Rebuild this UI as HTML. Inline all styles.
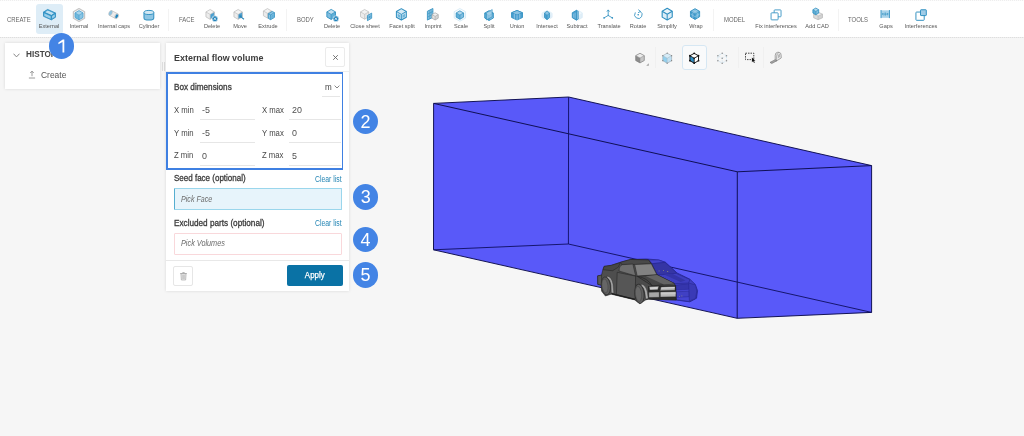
<!DOCTYPE html>
<html>
<head>
<meta charset="utf-8">
<title>External flow volume</title>
<style>
*{box-sizing:border-box;margin:0;padding:0}
html,body{width:1024px;height:436px;overflow:hidden;background:#f6f6f6;font-family:"Liberation Sans",sans-serif;color:#333}
.abs{position:absolute}
#toolbar{position:absolute;left:0;top:0;width:1024px;height:37.5px;background:#fff;border-bottom:1px solid #e6e6e6;border-top:1px solid #f0f0f0}
#toolbar:before{content:"";position:absolute;left:0;top:-1px;width:1024px;height:1.4px;background:repeating-linear-gradient(90deg,#eeeeee 0 1px,#fcfcfc 1px 2px)}
#toolbar:after{content:"";position:absolute;left:0;bottom:-1px;width:1024px;height:1px;background:repeating-linear-gradient(90deg,#dedede 0 1px,#ededed 1px 2px)}
.tl{position:absolute;top:21.3px;font-size:6.1px;line-height:8px;color:#555;white-space:nowrap;transform:translateX(-50%) scaleX(0.92);text-align:center}
.grp{position:absolute;top:13.9px;font-size:6.6px;line-height:9px;color:#666;white-space:nowrap;transform-origin:0 50%;transform:scaleX(0.9)}
.sep{position:absolute;top:8px;width:1px;height:22px;background:#f3f3f3}
.ico{position:absolute;top:6.5px;width:16px;height:16px;overflow:visible}
.panel{position:absolute;background:#fff;box-shadow:0 0 3px rgba(0,0,0,.13)}
.lbl{position:absolute;font-size:9.4px;line-height:10px;color:#484848;white-space:nowrap;transform-origin:0 50%;transform:scaleX(0.825)}
.val{position:absolute;font-size:9.4px;line-height:10px;color:#505050;white-space:nowrap;transform-origin:0 50%;transform:scaleX(0.95)}
.ul{position:absolute;height:1px;background:#e6e6e6}
.b{font-weight:bold}
.num{position:absolute;width:25.4px;height:25.4px;border-radius:50%;background:#4384e5;color:#fff;font-size:18px;line-height:26.6px;text-align:center;margin-top:-0.3px;margin-left:-0.2px}
</style>
</head>
<body>
<div id="root" style="position:absolute;left:0;top:0;width:1024px;height:436px;will-change:transform">
<!-- 3D scene -->
<svg class="abs" style="left:0;top:0" width="1024" height="436" viewBox="0 0 1024 436">
 <g id="box">
  <polygon points="433.6,103.4 568.6,97 871.6,165.6 871.6,312.4 737.2,318.3 433.5,249.8" fill="#5959f9"/>
  <g stroke="#0c0c4c" stroke-width="0.95" fill="none" stroke-linejoin="round">
   <polygon points="433.6,103.4 568.6,97 871.6,165.6 871.6,312.4 737.2,318.3 433.5,249.8"/>
   <path d="M433.6,103.4 L737.3,171.8 L871.6,165.6 M737.3,171.8 L737.2,318.3"/><path d="M568.6,97 L568.4,244 L433.5,249.8 M568.4,244 L871.6,312.4" stroke="#121266" stroke-width="0.95"/>
  </g>
 </g>
 <g id="car" transform="translate(592,252) scale(0.128440)" stroke-linejoin="round">
  <!-- blue (inside box) half -->
  <g stroke="#262690" stroke-width="6">
   <polygon points="300,58 420,54 520,62 572,80 662,163 762,212 802,250 822,300 814,360 762,388 655,374 650,262 640,245 505,177 462,92 440,62" fill="#3f3fc2"/>
   <polygon points="440,62 520,63 570,81 470,90" fill="#4545cc" stroke-width="4"/>
   <polygon points="466,92 570,81 658,162 640,172 508,177" fill="#3535a4" stroke-width="5"/>
   <polygon points="508,180 655,166 762,214 752,242 642,246" fill="#3e3ec0" stroke-width="5"/>
   <polygon points="560,176 625,170 728,222 690,234" fill="#3434a8" stroke="none"/>
   <polygon points="650,262 775,252 812,300 810,358 762,386 656,372" fill="#4545d2" stroke-width="5"/>
   <polygon points="656,258 753,248 753,290 656,296" fill="#3535ac" stroke="#2a2a98" stroke-width="4"/>
   <polygon points="656,310 757,305 757,348 656,353" fill="#4040c4" stroke="#2a2a98" stroke-width="4"/>
   <polygon points="753,242 806,256 816,304 806,362 758,382" fill="#3a3ab6" stroke="#2a2a98" stroke-width="5"/>
  </g>
  <g fill="#d8d060" stroke="none"><circle cx="522" cy="147" r="3.5"/><circle cx="556" cy="143" r="3.5"/><circle cx="590" cy="152" r="3.5"/><circle cx="683" cy="345" r="3"/><circle cx="700" cy="342" r="3"/></g>
  <!-- gray (outside box) half -->
  <g stroke="#222" stroke-width="4.5">
   <!-- body side silhouette -->
   <polygon points="44,186 74,180 84,140 94,112 150,104 220,80 300,58 440,62 462,92 505,177 640,245 650,262 655,374 440,368 420,372 372,402 330,372 150,328 104,342 74,304 72,258 44,252" fill="#4e4e4e"/>
   <!-- trunk / rear deck -->
   <polygon points="94,112 150,104 222,82 205,118 160,146 86,138" fill="#464646" stroke-width="4"/>
   <!-- roof -->
   <polygon points="222,80 300,58 440,62 462,92 330,97 232,97" fill="#494949" stroke-width="4"/>
   <!-- side window -->
   <path d="M210,148 Q212,106 236,99 L318,94 L340,186 Z" fill="#6e6e6e" stroke-width="4"/>
   <!-- windshield -->
   <polygon points="332,98 462,92 505,177 352,187" fill="#828282" stroke-width="4"/>
   <!-- hood -->
   <polygon points="352,190 505,178 640,245 470,264" fill="#464646" stroke-width="4"/>
   <polygon points="420,188 505,180 640,245 560,254" fill="#646464" stroke="none"/><path d="M352,190 Q430,200 470,264" fill="none" stroke="#222" stroke-width="5"/>
   <!-- door / side panel -->
   <polygon points="196,158 340,188 336,368 190,332" fill="#565656" stroke-width="4"/>
   <!-- front fender -->
   <polygon points="340,190 352,190 470,266 440,270 440,366 420,370 405,290 372,250 338,258" fill="#4b4b4b" stroke-width="3"/>
   <!-- rear bumper -->
   <polygon points="44,186 74,180 76,258 46,252" fill="#585858" stroke-width="4"/>
   <!-- front fascia -->
   <polygon points="440,270 470,264 650,262 655,374 440,366" fill="#2c2c2c" stroke-width="4"/>
   <polygon points="445,271 520,267 512,293 450,296" fill="#d0d0d0" stroke-width="3"/>
   <polygon points="536,273 646,269 646,298 531,301" fill="#aeaeae" stroke-width="3"/>
   <polygon points="541,276 644,272 644,282 539,286" fill="#d2d2d2" stroke="none"/>
   <polygon points="442,313 524,311 524,353 442,354" fill="#a6a6a6" stroke-width="3"/>
   <polygon points="532,312 653,310 653,349 532,351" fill="#b6b6b6" stroke-width="3"/>
   <polygon points="536,316 650,314 650,328 536,330" fill="#c8c8c8" stroke="none"/>
   <!-- wheel arches (light crescents) -->
   <path d="M118,186 Q156,196 164,252 L170,322 L150,318 L148,258 Q142,214 118,200 Z" fill="#a4a4a4" stroke="#2a2a2a" stroke-width="3"/>
   <path d="M384,250 Q420,260 430,310 L438,362 L418,366 L412,316 Q404,274 384,264 Z" fill="#acacac" stroke="#2a2a2a" stroke-width="3"/>
   <!-- rear wheel -->
   <ellipse cx="108" cy="264" rx="35" ry="70" fill="#5c5c5c" transform="rotate(-7 108 264)"/>
   <ellipse cx="101" cy="264" rx="23" ry="54" fill="#666" stroke="#3a3a3a" stroke-width="3" transform="rotate(-7 101 264)"/>
   <!-- front wheel -->
   <ellipse cx="369" cy="326" rx="36" ry="75" fill="#5e5e5e" transform="rotate(-6 369 326)"/>
   <ellipse cx="362" cy="326" rx="24" ry="58" fill="#686868" stroke="#3a3a3a" stroke-width="3" transform="rotate(-6 362 326)"/>
   <!-- sill -->
   <path d="M152,324 L334,368" fill="none" stroke="#1e1e1e" stroke-width="10"/>
  </g>
 </g>
</svg>


<!-- view toolbar -->
<div id="viewbar">
 <div class="abs" style="left:682.2px;top:45px;width:25.3px;height:24.5px;background:#f9fafb;border:1px solid #d6e7f3;border-radius:3px"></div>
 <div class="abs" style="left:655px;top:47px;width:1px;height:21px;background:#f0f0f0"></div>
 <div class="abs" style="left:737.5px;top:47px;width:1px;height:21px;background:#f0f0f0"></div>
 <div class="abs" style="left:763px;top:47px;width:1px;height:21px;background:#f0f0f0"></div>
 <!-- gray cube : center (639.75,57.85) -->
 <svg class="abs" style="left:632.75px;top:50.85px" width="14" height="14" viewBox="0 0 16 16">
  <polygon points="8,2.6 12.9,5.3 8,8 3.1,5.3" fill="#ececec"/><polygon points="3.1,5.3 8,8 8,13.6 3.1,10.9" fill="#8c8c8c"/><polygon points="8,8 12.9,5.3 12.9,10.9 8,13.6" fill="#c6c6c6"/>
  <polygon points="8,2.6 12.9,5.3 12.9,10.9 8,13.6 3.1,10.9 3.1,5.3" fill="none" stroke="#7a7a7a" stroke-width="0.8" stroke-linejoin="round"/>
  <path d="M3.1,5.3 L8,8 L12.9,5.3 M8,8 V13.6" stroke="#8a8a8a" stroke-width="0.6" fill="none"/>
 </svg>
 <svg class="abs" style="left:645.8px;top:63.4px" width="3" height="3" viewBox="0 0 3 3"><polygon points="2.8,0.2 2.8,2.8 0.2,2.8" fill="#a0a0a0"/></svg>
 <!-- light blue cube : center (667.4,57.9) -->
 <svg class="abs" style="left:660.2px;top:50.7px" width="14.4" height="14.4" viewBox="0 0 16 16">
  <polygon points="8,2.4 12.9,5.2 8,8 3.1,5.2" fill="#d6ecf8"/><polygon points="3.1,5.2 8,8 8,13.6 3.1,10.8" fill="#92d0ef"/><polygon points="8,8 12.9,5.2 12.9,10.8 8,13.6" fill="#bfe0f3"/>
  <polygon points="8,2.4 12.9,5.2 12.9,10.8 8,13.6 3.1,10.8 3.1,5.2" fill="none" stroke="#9aa9b3" stroke-width="0.7" stroke-linejoin="round"/>
  <path d="M3.1,5.2 L8,8 L12.9,5.2 M8,8 V13.6" stroke="#9fb4c0" stroke-width="0.6" fill="none"/>
  <g fill="#808080"><circle cx="8" cy="2.4" r="0.7"/><circle cx="12.9" cy="5.2" r="0.7"/><circle cx="12.9" cy="10.8" r="0.7"/><circle cx="8" cy="13.6" r="0.7"/><circle cx="3.1" cy="10.8" r="0.7"/><circle cx="3.1" cy="5.2" r="0.7"/></g>
 </svg>
 <!-- black/blue cube (selected) : center (694.65,58) -->
 <svg class="abs" style="left:687.45px;top:50.8px" width="14.4" height="14.4" viewBox="0 0 16 16">
  <polygon points="8,2.6 12.8,5.3 8,8 3.2,5.3" fill="#fff"/><polygon points="3.2,5.3 8,8 8,13.5 3.2,10.8" fill="#2e8fc6"/><polygon points="8,8 12.8,5.3 12.8,10.8 8,13.5" fill="#fff"/>
  <polygon points="8,2.6 12.8,5.3 12.8,10.8 8,13.5 3.2,10.8 3.2,5.3" fill="none" stroke="#1a1a1a" stroke-width="1.1" stroke-linejoin="round"/>
  <path d="M3.2,5.3 L8,8 L12.8,5.3 M8,8 V13.5" stroke="#1a1a1a" stroke-width="1.0" fill="none"/>
  <g fill="#111"><circle cx="8" cy="2.6" r="1.0"/><circle cx="12.8" cy="5.3" r="1.0"/><circle cx="12.8" cy="10.8" r="1.0"/><circle cx="8" cy="13.5" r="1.0"/><circle cx="3.2" cy="10.8" r="1.0"/><circle cx="3.2" cy="5.3" r="1.0"/><circle cx="8" cy="8" r="0.9"/></g>
 </svg>
 <!-- dotted cube : center (722,58) -->
 <svg class="abs" style="left:714.8px;top:50.8px" width="14.4" height="14.4" viewBox="0 0 16 16">
  <polygon points="8,2.6 12.8,5.3 12.8,10.8 8,13.5 3.2,10.8 3.2,5.3" fill="none" stroke="#b4d8ee" stroke-width="0.8" stroke-dasharray="0.9 0.9"/>
  <path d="M3.2,5.3 L8,8 L12.8,5.3 M8,8 V13.5" stroke="#bcdcf0" stroke-width="0.7" fill="none" stroke-dasharray="0.9 0.9"/>
  <g fill="#8e8e8e"><circle cx="8" cy="2.6" r="0.85"/><circle cx="12.8" cy="5.3" r="0.85"/><circle cx="12.8" cy="10.8" r="0.85"/><circle cx="8" cy="13.5" r="0.85"/><circle cx="3.2" cy="10.8" r="0.85"/><circle cx="3.2" cy="5.3" r="0.85"/><circle cx="8" cy="8" r="0.8"/></g>
 </svg>
 <!-- box select -->
 <svg class="abs" style="left:742px;top:49.2px" width="16" height="16" viewBox="0 0 16 16">
  <rect x="3.5" y="4.2" width="8.3" height="6.4" fill="none" stroke="#333" stroke-width="0.9" stroke-dasharray="1.5 1"/>
  <path d="M9.9,8.4 L9.9,13.3 L11.1,12.1 L12.0,13.9 L12.8,13.5 L11.9,11.8 L13.4,11.7 Z" fill="#111"/>
 </svg>
 <!-- tape measure (page coords) -->
 <svg class="abs" style="left:766px;top:48px" width="20" height="20" viewBox="766 48 20 20">
  <path d="M775.2,60.6 L775.2,55.6 Q775.2,52.4 777.6,52.3 L778.9,52.3 Q781.2,52.5 781.2,55.4 L781.2,58.0 L776.6,60.9 Z" fill="#ebebeb" stroke="#7c7c7c" stroke-width="0.65" stroke-linejoin="round"/>
  <path d="M776.6,60.9 L776.6,56.3 Q776.7,53.6 778.9,52.4" fill="none" stroke="#7c7c7c" stroke-width="0.55"/>
  <path d="M778.4,57.6 L778.4,55.6 Q778.5,54.5 779.6,54.4 L779.8,56.6 Z" fill="#cfcfcf" stroke="#777" stroke-width="0.4"/>
  <polygon points="770.0,62.4 775.2,59.7 776.8,60.8 771.8,63.5" fill="#a4a4a4" stroke="#6c6c6c" stroke-width="0.6" stroke-linejoin="round"/>
 </svg>
</div>

<!-- top toolbar -->
<div id="toolbar">
<div class="abs" style="left:35.7px;top:2.8px;width:27.3px;height:30px;background:#deedf7;border-radius:3px"></div>
<div class="grp" style="left:7.00px">CREATE</div>
<div class="grp" style="left:178.75px">FACE</div>
<div class="grp" style="left:297.00px">BODY</div>
<div class="grp" style="left:723.75px">MODEL</div>
<div class="grp" style="left:848.00px">TOOLS</div>
<div class="sep" style="left:168.00px"></div>
<div class="sep" style="left:286.20px"></div>
<div class="sep" style="left:713.00px"></div>
<div class="sep" style="left:838.20px"></div>
<svg class="ico" style="left:41.98px;top:6.08px;width:15.04px;height:15.04px" width="15.04" height="15.04" viewBox="0 0 16 16"><polygon points="1.6,5.4 6.0,2.6 14.4,6.4 14.4,10.9 10.0,13.7 1.6,9.9" fill="#48a3d2"/><polygon points="3.3,5.5 6.1,3.7 12.7,6.7 9.9,8.5" fill="#c0e0f1"/><polygon points="2.5,6.8 9.2,9.8 9.2,12.5 2.5,9.5" fill="#9dcfe9"/><polygon points="10.8,9.7 13.6,7.9 13.6,10.5 10.8,12.3" fill="#9dcfe9"/><path d="M1.6,5.4 L6.0,2.6 L14.4,6.4 L14.4,10.9 L10.0,13.7 L1.6,9.9 Z M1.6,5.4 L10.0,9.2 L14.4,6.4 M10.0,9.2 L10.0,13.7" fill="none" stroke="#2d8dc0" stroke-width="0.9" stroke-linejoin="round"/></svg>
<div class="tl" style="left:49.38px">External</div>
<svg class="ico" style="left:70.90px;top:5.50px;width:16.00px;height:16.00px" width="16.00" height="16.00" viewBox="0 0 16 16"><g><polygon points="8.00,1.60 13.60,4.80 8.00,8.00 2.40,4.80" fill="#f4f4f4"/><polygon points="2.40,4.80 8.00,8.00 8.00,14.40 2.40,11.20" fill="#f0f0f0"/><polygon points="8.00,8.00 13.60,4.80 13.60,11.20 8.00,14.40" fill="#ececec"/><polygon points="8.00,1.60 13.60,4.80 13.60,11.20 8.00,14.40 2.40,11.20 2.40,4.80" fill="none" stroke="#c6c6c6" stroke-width="1.2" stroke-linejoin="round"/></g><g><polygon points="8.00,3.60 12.00,5.90 8.00,8.20 4.00,5.90" fill="#a9d5ec"/><polygon points="4.00,5.90 8.00,8.20 8.00,12.80 4.00,10.50" fill="#6fb9de"/><polygon points="8.00,8.20 12.00,5.90 12.00,10.50 8.00,12.80" fill="#8cc6e5"/><polygon points="8.00,3.60 12.00,5.90 12.00,10.50 8.00,12.80 4.00,10.50 4.00,5.90" fill="none" stroke="#4fa3d0" stroke-width="0.85" stroke-linejoin="round"/><path d="M4.00,5.90 L8.00,8.20 L12.00,5.90 M8.00,8.20 L8.00,12.80" fill="none" stroke="#4fa3d0" stroke-width="0.765" stroke-linejoin="round"/></g></svg>
<div class="tl" style="left:78.75px">Internal</div>
<svg class="ico" style="left:107.34px;top:7.04px;width:13.12px;height:13.12px" width="13.12" height="13.12" viewBox="0 0 16 16"><g transform="rotate(28 8 8)"><rect x="3.6" y="4.8" width="8.6" height="6.4" fill="#ececec" stroke="#bdbdbd" stroke-width="0.8"/><ellipse cx="3.8" cy="8" rx="1.9" ry="3.2" fill="#8cc3e2" stroke="#bdbdbd" stroke-width="0.6"/><ellipse cx="12.3" cy="8" rx="2.1" ry="3.3" fill="#ececec" stroke="#bdbdbd" stroke-width="0.8"/><ellipse cx="12.3" cy="8" rx="1.5" ry="2.5" fill="#1f82bb"/></g></svg>
<div class="tl" style="left:114.00px">Internal caps</div>
<svg class="ico" style="left:142.32px;top:7.12px;width:13.76px;height:13.76px" width="13.76" height="13.76" viewBox="0 0 16 16"><path d="M2.3,5.2 V11.6 A5.7,2.4 0 0 0 13.7,11.6 V5.2" fill="#8fc6e4" stroke="#2f8fc0" stroke-width="1.2"/><ellipse cx="8" cy="5.2" rx="5.7" ry="2.4" fill="#d2e8f4" stroke="#2f8fc0" stroke-width="1.1"/></svg>
<div class="tl" style="left:149.38px">Cylinder</div>
<svg class="ico" style="left:204.46px;top:6.76px;width:14.08px;height:14.08px" width="14.08" height="14.08" viewBox="0 0 16 16"><g><polygon points="7.00,1.70 11.80,4.50 7.00,7.30 2.20,4.50" fill="#f3f3f3"/><polygon points="2.20,4.50 7.00,7.30 7.00,12.90 2.20,10.10" fill="#ececec"/><polygon points="7.00,7.30 11.80,4.50 11.80,10.10 7.00,12.90" fill="#4a9fd0"/><polygon points="7.00,1.70 11.80,4.50 11.80,10.10 7.00,12.90 2.20,10.10 2.20,4.50" fill="none" stroke="#b9b9b9" stroke-width="0.8" stroke-linejoin="round"/><path d="M2.20,4.50 L7.00,7.30 L11.80,4.50 M7.00,7.30 L7.00,12.90" fill="none" stroke="#b9b9b9" stroke-width="0.7200000000000001" stroke-linejoin="round"/></g><circle cx="12.4" cy="12.2" r="3.3" fill="#1f82bb" stroke="#fff" stroke-width="0.7"/><path d="M11.1,10.899999999999999 l2.6,2.6 m0,-2.6 l-2.6,2.6" stroke="#fff" stroke-width="0.9" fill="none"/></svg>
<div class="tl" style="left:211.88px">Delete</div>
<svg class="ico" style="left:232.46px;top:6.76px;width:14.08px;height:14.08px" width="14.08" height="14.08" viewBox="0 0 16 16"><g><polygon points="7.00,1.70 11.80,4.50 7.00,7.30 2.20,4.50" fill="#f3f3f3"/><polygon points="2.20,4.50 7.00,7.30 7.00,12.90 2.20,10.10" fill="#ececec"/><polygon points="7.00,7.30 11.80,4.50 11.80,10.10 7.00,12.90" fill="#4a9fd0"/><polygon points="7.00,1.70 11.80,4.50 11.80,10.10 7.00,12.90 2.20,10.10 2.20,4.50" fill="none" stroke="#b9b9b9" stroke-width="0.8" stroke-linejoin="round"/><path d="M2.20,4.50 L7.00,7.30 L11.80,4.50 M7.00,7.30 L7.00,12.90" fill="none" stroke="#b9b9b9" stroke-width="0.7200000000000001" stroke-linejoin="round"/></g><path d="M9,9.2 L13.6,12.8" stroke="#2a86b8" stroke-width="1.2"/><path d="M8.2,8.2 L11.6,8.8 L9.2,11.4 Z" fill="#2a86b8"/></svg>
<div class="tl" style="left:240.00px">Move</div>
<svg class="ico" style="left:261.56px;top:6.46px;width:14.08px;height:14.08px" width="14.08" height="14.08" viewBox="0 0 16 16"><g><polygon points="6.20,1.80 10.80,4.50 6.20,7.20 1.60,4.50" fill="#f3f3f3"/><polygon points="1.60,4.50 6.20,7.20 6.20,12.60 1.60,9.90" fill="#ececec"/><polygon points="6.20,7.20 10.80,4.50 10.80,9.90 6.20,12.60" fill="#e6e6e6"/><polygon points="6.20,1.80 10.80,4.50 10.80,9.90 6.20,12.60 1.60,9.90 1.60,4.50" fill="none" stroke="#b9b9b9" stroke-width="0.8" stroke-linejoin="round"/><path d="M1.60,4.50 L6.20,7.20 L10.80,4.50 M6.20,7.20 L6.20,12.60" fill="none" stroke="#b9b9b9" stroke-width="0.7200000000000001" stroke-linejoin="round"/></g><polygon points="7.2,7.6 11.6,5.0 14.2,6.4 14.2,11.8 9.8,14.4 7.2,13.0" fill="#8cc3e2" stroke="#2f8fc0" stroke-width="0.9" stroke-linejoin="round"/><path d="M7.2,7.6 L9.8,9.0 L14.2,6.4 M9.8,9.0 V14.4" stroke="#2f8fc0" stroke-width="0.8" fill="none"/><polygon points="10.6,9.6 13.4,8.0 13.4,11.4 10.6,13.0" fill="#5fafd8"/></svg>
<div class="tl" style="left:268.38px">Extrude</div>
<svg class="ico" style="left:325.46px;top:6.76px;width:14.08px;height:14.08px" width="14.08" height="14.08" viewBox="0 0 16 16"><g><polygon points="7.00,1.60 11.90,4.45 7.00,7.30 2.10,4.45" fill="#c4e0f0"/><polygon points="2.10,4.45 7.00,7.30 7.00,13.00 2.10,10.15" fill="#7fbde0"/><polygon points="7.00,7.30 11.90,4.45 11.90,10.15 7.00,13.00" fill="#5fafd8"/><polygon points="7.00,1.60 11.90,4.45 11.90,10.15 7.00,13.00 2.10,10.15 2.10,4.45" fill="none" stroke="#2f8fc0" stroke-width="1.0" stroke-linejoin="round"/><path d="M2.10,4.45 L7.00,7.30 L11.90,4.45 M7.00,7.30 L7.00,13.00" fill="none" stroke="#2f8fc0" stroke-width="0.9" stroke-linejoin="round"/></g><circle cx="12.4" cy="12.2" r="3.3" fill="#1f82bb" stroke="#fff" stroke-width="0.7"/><path d="M11.1,10.899999999999999 l2.6,2.6 m0,-2.6 l-2.6,2.6" stroke="#fff" stroke-width="0.9" fill="none"/></svg>
<div class="tl" style="left:332.38px">Delete</div>
<svg class="ico" style="left:358.76px;top:6.76px;width:14.08px;height:14.08px" width="14.08" height="14.08" viewBox="0 0 16 16"><g><polygon points="6.40,1.70 11.10,4.45 6.40,7.20 1.70,4.45" fill="#f3f3f3"/><polygon points="1.70,4.45 6.40,7.20 6.40,12.70 1.70,9.95" fill="#ececec"/><polygon points="6.40,7.20 11.10,4.45 11.10,9.95 6.40,12.70" fill="#e6e6e6"/><polygon points="6.40,1.70 11.10,4.45 11.10,9.95 6.40,12.70 1.70,9.95 1.70,4.45" fill="none" stroke="#b9b9b9" stroke-width="0.8" stroke-linejoin="round"/><path d="M1.70,4.45 L6.40,7.20 L11.10,4.45 M6.40,7.20 L6.40,12.70" fill="none" stroke="#b9b9b9" stroke-width="0.7200000000000001" stroke-linejoin="round"/></g><polygon points="9.6,8.6 14.4,5.8 14.4,11.6 9.6,14.4" fill="#8cc3e2" stroke="#2f8fc0" stroke-width="0.9" stroke-linejoin="round"/><polygon points="10.8,9.6 13.2,8.2 13.2,10.9 10.8,12.3" fill="#4a9fd0"/></svg>
<div class="tl" style="left:365.12px">Close sheet</div>
<svg class="ico" style="left:393.84px;top:6.24px;width:14.72px;height:14.72px" width="14.72" height="14.72" viewBox="0 0 16 16"><g><polygon points="8.00,1.80 13.40,4.90 8.00,8.00 2.60,4.90" fill="#d6eaf5"/><polygon points="2.60,4.90 8.00,8.00 8.00,14.20 2.60,11.10" fill="#c4e0f0"/><polygon points="8.00,8.00 13.40,4.90 13.40,11.10 8.00,14.20" fill="#c4e0f0"/><polygon points="8.00,1.80 13.40,4.90 13.40,11.10 8.00,14.20 2.60,11.10 2.60,4.90" fill="none" stroke="#2f8fc0" stroke-width="1.1" stroke-linejoin="round"/><path d="M2.60,4.90 L8.00,8.00 L13.40,4.90 M8.00,8.00 L8.00,14.20" fill="none" stroke="#2f8fc0" stroke-width="0.9900000000000001" stroke-linejoin="round"/></g><polygon points="4.0,7.4 6.8,9.0 6.8,12.0 4.0,10.4" fill="#6fb6db"/><polygon points="9.2,9.0 12.0,7.4 12.0,10.4 9.2,12.0" fill="#6fb6db"/></svg>
<div class="tl" style="left:401.50px">Facet split</div>
<svg class="ico" style="left:425.24px;top:6.24px;width:14.72px;height:14.72px" width="14.72" height="14.72" viewBox="0 0 16 16"><polygon points="2.6,4.6 8.6,1.6 8.6,11.2 2.6,14.2" fill="#8cc3e2" stroke="#2f8fc0" stroke-width="0.9" stroke-linejoin="round"/><path d="M4.6,3.6 V13.2 M6.6,2.6 V12.2 M2.6,7.8 L8.6,4.8 M2.6,11 L8.6,8" stroke="#2f8fc0" stroke-width="0.6" fill="none"/><g><polygon points="11.00,6.30 14.40,8.25 11.00,10.20 7.60,8.25" fill="#f0f0f0"/><polygon points="7.60,8.25 11.00,10.20 11.00,14.10 7.60,12.15" fill="#e2e2e2"/><polygon points="11.00,10.20 14.40,8.25 14.40,12.15 11.00,14.10" fill="#d6d6d6"/><polygon points="11.00,6.30 14.40,8.25 14.40,12.15 11.00,14.10 7.60,12.15 7.60,8.25" fill="none" stroke="#a9a9a9" stroke-width="0.8" stroke-linejoin="round"/><path d="M7.60,8.25 L11.00,10.20 L14.40,8.25 M11.00,10.20 L11.00,14.10" fill="none" stroke="#a9a9a9" stroke-width="0.7200000000000001" stroke-linejoin="round"/></g></svg>
<div class="tl" style="left:432.88px">Imprint</div>
<svg class="ico" style="left:453.12px;top:6.52px;width:13.76px;height:13.76px" width="13.76" height="13.76" viewBox="0 0 16 16"><g><polygon points="8.00,0.60 14.60,4.30 8.00,8.00 1.40,4.30" fill="#fafdff"/><polygon points="1.40,4.30 8.00,8.00 8.00,15.40 1.40,11.70" fill="#f4fafd"/><polygon points="8.00,8.00 14.60,4.30 14.60,11.70 8.00,15.40" fill="#f4fafd"/><polygon points="8.00,0.60 14.60,4.30 14.60,11.70 8.00,15.40 1.40,11.70 1.40,4.30" fill="none" stroke="#c2e0f0" stroke-width="0.7" stroke-linejoin="round"/></g><g><polygon points="8.00,3.30 12.30,5.75 8.00,8.20 3.70,5.75" fill="#b4d9ed"/><polygon points="3.70,5.75 8.00,8.20 8.00,13.10 3.70,10.65" fill="#5fafd8"/><polygon points="8.00,8.20 12.30,5.75 12.30,10.65 8.00,13.10" fill="#7fbde0"/><polygon points="8.00,3.30 12.30,5.75 12.30,10.65 8.00,13.10 3.70,10.65 3.70,5.75" fill="none" stroke="#2f8fc0" stroke-width="0.9" stroke-linejoin="round"/><path d="M3.70,5.75 L8.00,8.20 L12.30,5.75 M8.00,8.20 L8.00,13.10" fill="none" stroke="#2f8fc0" stroke-width="0.81" stroke-linejoin="round"/></g></svg>
<div class="tl" style="left:460.50px">Scale</div>
<svg class="ico" style="left:481.56px;top:6.56px;width:14.08px;height:14.08px" width="14.08" height="14.08" viewBox="0 0 16 16"><g><polygon points="8.00,3.00 12.90,5.80 8.00,8.60 3.10,5.80" fill="#b4d9ed"/><polygon points="3.10,5.80 8.00,8.60 8.00,14.20 3.10,11.40" fill="#5fafd8"/><polygon points="8.00,8.60 12.90,5.80 12.90,11.40 8.00,14.20" fill="#7fbde0"/><polygon points="8.00,3.00 12.90,5.80 12.90,11.40 8.00,14.20 3.10,11.40 3.10,5.80" fill="none" stroke="#2f8fc0" stroke-width="1.0" stroke-linejoin="round"/><path d="M3.10,5.80 L8.00,8.60 L12.90,5.80 M8.00,8.60 L8.00,14.20" fill="none" stroke="#2f8fc0" stroke-width="0.9" stroke-linejoin="round"/></g><polygon points="5.0,5.4 11.6,1.8 11.6,10.0 5.0,13.6" fill="#9ccbe6" fill-opacity="0.75" stroke="#2f8fc0" stroke-width="0.7" stroke-linejoin="round"/></svg>
<div class="tl" style="left:488.75px">Split</div>
<svg class="ico" style="left:509.76px;top:6.56px;width:14.08px;height:14.08px" width="14.08" height="14.08" viewBox="0 0 16 16"><polygon points="8,2.8 14.2,5.4 14.2,10.8 8,13.6 1.8,10.8 1.8,5.4" fill="#4a9fd0" stroke="#2f8fc0" stroke-width="1.0" stroke-linejoin="round"/><polygon points="8,2.8 14.2,5.4 8,8 1.8,5.4" fill="#8cc3e2" stroke="#2f8fc0" stroke-width="0.8" stroke-linejoin="round"/><path d="M8,8 V13.6 M4.9,6.7 V12.2 M11.1,6.7 V12.2" stroke="#d6eaf5" stroke-width="0.6"/></svg>
<div class="tl" style="left:516.75px">Union</div>
<svg class="ico" style="left:539.56px;top:6.56px;width:14.08px;height:14.08px" width="14.08" height="14.08" viewBox="0 0 16 16"><g><polygon points="5.60,3.70 9.00,6.00 5.60,8.30 2.20,6.00" fill="#eef7fc"/><polygon points="2.20,6.00 5.60,8.30 5.60,12.90 2.20,10.60" fill="#e6f2fa"/><polygon points="5.60,8.30 9.00,6.00 9.00,10.60 5.60,12.90" fill="#e6f2fa"/><polygon points="5.60,3.70 9.00,6.00 9.00,10.60 5.60,12.90 2.20,10.60 2.20,6.00" fill="none" stroke="#d0e6f3" stroke-width="0.6" stroke-linejoin="round"/></g><g><polygon points="10.40,3.70 13.80,6.00 10.40,8.30 7.00,6.00" fill="#eef7fc"/><polygon points="7.00,6.00 10.40,8.30 10.40,12.90 7.00,10.60" fill="#e6f2fa"/><polygon points="10.40,8.30 13.80,6.00 13.80,10.60 10.40,12.90" fill="#e6f2fa"/><polygon points="10.40,3.70 13.80,6.00 13.80,10.60 10.40,12.90 7.00,10.60 7.00,6.00" fill="none" stroke="#d0e6f3" stroke-width="0.6" stroke-linejoin="round"/></g><g><polygon points="8.00,3.30 10.90,5.80 8.00,8.30 5.10,5.80" fill="#8cc3e2"/><polygon points="5.10,5.80 8.00,8.30 8.00,13.30 5.10,10.80" fill="#4a9fd0"/><polygon points="8.00,8.30 10.90,5.80 10.90,10.80 8.00,13.30" fill="#5fafd8"/><polygon points="8.00,3.30 10.90,5.80 10.90,10.80 8.00,13.30 5.10,10.80 5.10,5.80" fill="none" stroke="#2f8fc0" stroke-width="0.9" stroke-linejoin="round"/><path d="M5.10,5.80 L8.00,8.30 L10.90,5.80 M8.00,8.30 L8.00,13.30" fill="none" stroke="#2f8fc0" stroke-width="0.81" stroke-linejoin="round"/></g></svg>
<div class="tl" style="left:546.75px">Intersect</div>
<svg class="ico" style="left:569.76px;top:6.56px;width:14.08px;height:14.08px" width="14.08" height="14.08" viewBox="0 0 16 16"><g><polygon points="9.60,2.80 14.00,5.50 9.60,8.20 5.20,5.50" fill="#eef7fc"/><polygon points="5.20,5.50 9.60,8.20 9.60,13.60 5.20,10.90" fill="#e6f2fa"/><polygon points="9.60,8.20 14.00,5.50 14.00,10.90 9.60,13.60" fill="#e0eff8"/><polygon points="9.60,2.80 14.00,5.50 14.00,10.90 9.60,13.60 5.20,10.90 5.20,5.50" fill="none" stroke="#d0e6f3" stroke-width="0.6" stroke-linejoin="round"/></g><polygon points="2.6,5.4 7.4,2.6 7.4,13.8 2.6,11.0" fill="#4a9fd0" stroke="#2f8fc0" stroke-width="1.0" stroke-linejoin="round"/><polygon points="7.4,2.6 9.4,3.8 9.4,12.6 7.4,13.8" fill="#8cc3e2" stroke="#2f8fc0" stroke-width="0.8" stroke-linejoin="round"/><path d="M4.2,6.4 V11 M5.8,5.4 V12" stroke="#b4d9ed" stroke-width="0.6"/></svg>
<div class="tl" style="left:577.38px">Subtract</div>
<svg class="ico" style="left:601.00px;top:6.00px;width:14.40px;height:14.40px" width="14.40" height="14.40" viewBox="0 0 16 16"><path d="M8,9.4 V3.8 M8,9.4 L3.6,12 M8,9.4 L12.4,12" stroke="#2f8fc0" stroke-width="0.9" fill="none" stroke-linecap="round"/><path d="M6.8,4.8 L8,3.2 L9.2,4.8" stroke="#2f8fc0" stroke-width="0.9" fill="none" stroke-linejoin="round" stroke-linecap="round"/><circle cx="3.4" cy="12.1" r="0.9" fill="#2f8fc0"/><circle cx="12.6" cy="12.1" r="0.9" fill="#2f8fc0"/></svg>
<div class="tl" style="left:608.75px">Translate</div>
<svg class="ico" style="left:631.20px;top:6.20px;width:14.40px;height:14.40px" width="14.40" height="14.40" viewBox="0 0 16 16"><path d="M10.4,5.0 A4.2,4.2 0 1 1 4.6,6.4" stroke="#2f8fc0" stroke-width="0.95" fill="none" stroke-linecap="round"/><path d="M8.4,3.2 L10.6,4.9 L8.2,6.2" stroke="#2f8fc0" stroke-width="0.9" fill="none" stroke-linejoin="round" stroke-linecap="round"/><circle cx="8" cy="8.6" r="0.9" fill="#2f8fc0"/></svg>
<div class="tl" style="left:638.38px">Rotate</div>
<svg class="ico" style="left:659.80px;top:6.20px;width:14.40px;height:14.40px" width="14.40" height="14.40" viewBox="0 0 16 16"><g><polygon points="8.00,1.50 13.60,4.75 8.00,8.00 2.40,4.75" fill="#eaf4fa"/><polygon points="2.40,4.75 8.00,8.00 8.00,14.50 2.40,11.25" fill="#dcedf7"/><polygon points="8.00,8.00 13.60,4.75 13.60,11.25 8.00,14.50" fill="#dcedf7"/><polygon points="8.00,1.50 13.60,4.75 13.60,11.25 8.00,14.50 2.40,11.25 2.40,4.75" fill="none" stroke="#2f8fc0" stroke-width="1.25" stroke-linejoin="round"/><path d="M2.40,4.75 L8.00,8.00 L13.60,4.75 M8.00,8.00 L8.00,14.50" fill="none" stroke="#2f8fc0" stroke-width="1.125" stroke-linejoin="round"/></g></svg>
<div class="tl" style="left:667.25px">Simplify</div>
<svg class="ico" style="left:687.96px;top:6.36px;width:14.08px;height:14.08px" width="14.08" height="14.08" viewBox="0 0 16 16"><g><polygon points="8.00,1.90 13.20,4.95 8.00,8.00 2.80,4.95" fill="#7fbde0"/><polygon points="2.80,4.95 8.00,8.00 8.00,14.10 2.80,11.05" fill="#4a9fd0"/><polygon points="8.00,8.00 13.20,4.95 13.20,11.05 8.00,14.10" fill="#5fafd8"/><polygon points="8.00,1.90 13.20,4.95 13.20,11.05 8.00,14.10 2.80,11.05 2.80,4.95" fill="none" stroke="#2f8fc0" stroke-width="1.0" stroke-linejoin="round"/><path d="M2.80,4.95 L8.00,8.00 L13.20,4.95 M8.00,8.00 L8.00,14.10" fill="none" stroke="#2f8fc0" stroke-width="0.9" stroke-linejoin="round"/></g><path d="M5.4,3.5 L10.6,6.5 M10.6,3.5 L5.4,6.5 M2.8,8 L8,11 L13.2,8 M5.4,6.5 V12.5 M10.6,6.5 V12.5" stroke="#b4d9ed" stroke-width="0.5" fill="none"/></svg>
<div class="tl" style="left:695.62px">Wrap</div>
<svg class="ico" style="left:768.52px;top:6.82px;width:13.76px;height:13.76px" width="13.76" height="13.76" viewBox="0 0 16 16"><rect x="6" y="2.2" width="8" height="8" rx="0.8" fill="#fff" stroke="#2f8fc0" stroke-width="1.0"/><rect x="2.4" y="5.6" width="8.2" height="8.2" rx="0.8" fill="#fff" stroke="#2f8fc0" stroke-width="1.0"/></svg>
<div class="tl" style="left:775.75px">Fix interferences</div>
<svg class="ico" style="left:810.16px;top:5.56px;width:14.08px;height:14.08px" width="14.08" height="14.08" viewBox="0 0 16 16"><g><polygon points="9.20,6.00 14.20,8.10 9.20,10.20 4.20,8.10" fill="#efefef"/><polygon points="4.20,8.10 9.20,10.20 9.20,14.40 4.20,12.30" fill="#dcdcdc"/><polygon points="9.20,10.20 14.20,8.10 14.20,12.30 9.20,14.40" fill="#d2d2d2"/><polygon points="9.20,6.00 14.20,8.10 14.20,12.30 9.20,14.40 4.20,12.30 4.20,8.10" fill="none" stroke="#b5b5b5" stroke-width="0.8" stroke-linejoin="round"/><path d="M4.20,8.10 L9.20,10.20 L14.20,8.10 M9.20,10.20 L9.20,14.40" fill="none" stroke="#b5b5b5" stroke-width="0.7200000000000001" stroke-linejoin="round"/></g><g><polygon points="6.60,1.20 9.90,3.10 6.60,5.00 3.30,3.10" fill="#b4d9ed"/><polygon points="3.30,3.10 6.60,5.00 6.60,8.80 3.30,6.90" fill="#5fafd8"/><polygon points="6.60,5.00 9.90,3.10 9.90,6.90 6.60,8.80" fill="#7fbde0"/><polygon points="6.60,1.20 9.90,3.10 9.90,6.90 6.60,8.80 3.30,6.90 3.30,3.10" fill="none" stroke="#2f8fc0" stroke-width="0.9" stroke-linejoin="round"/><path d="M3.30,3.10 L6.60,5.00 L9.90,3.10 M6.60,5.00 L6.60,8.80" fill="none" stroke="#2f8fc0" stroke-width="0.81" stroke-linejoin="round"/></g></svg>
<div class="tl" style="left:817.38px">Add CAD</div>
<svg class="ico" style="left:879.26px;top:7.26px;width:12.48px;height:12.48px" width="12.48" height="12.48" viewBox="0 0 16 16"><rect x="2.4" y="3" width="11.2" height="9.6" fill="#a9d3ea"/><path d="M2.6,2.6 V13 M13.4,2.6 V13" stroke="#2f8fc0" stroke-width="1.1"/><path d="M4.2,7.8 H11.8 M5.6,6.4 L4.2,7.8 L5.6,9.2 M10.4,6.4 L11.8,7.8 L10.4,9.2" stroke="#2f8fc0" stroke-width="0.8" fill="none"/><path d="M8,5.6 V10" stroke="#2f8fc0" stroke-width="0.8"/></svg>
<div class="tl" style="left:885.62px">Gaps</div>
<svg class="ico" style="left:913.96px;top:6.56px;width:14.08px;height:14.08px" width="14.08" height="14.08" viewBox="0 0 16 16"><rect x="2.2" y="4.6" width="9.4" height="9.4" rx="0.8" fill="#fff" stroke="#2f8fc0" stroke-width="1.1"/><rect x="7.4" y="2.0" width="6.6" height="6.6" rx="0.6" fill="#9fcbe6" stroke="#2f8fc0" stroke-width="1.1"/></svg>
<div class="tl" style="left:921.12px">Interferences</div>
</div>

<!-- history panel -->
<div class="panel" style="left:5px;top:43px;width:155px;height:46px">
 <svg class="abs" style="left:8.2px;top:9.6px" width="7" height="5" viewBox="0 0 7 5"><path d="M0.5,0.7 L3.5,3.9 L6.5,0.7" stroke="#808080" stroke-width="0.95" fill="none"/></svg>
 <div class="abs b" style="left:20.5px;top:6.1px;font-size:9.2px;line-height:11px;color:#444;white-space:nowrap;transform-origin:0 50%;transform:scaleX(0.89)">HISTORY</div>
 <svg class="abs" style="left:22.8px;top:27.2px" width="8" height="9" viewBox="0 0 8 9"><path d="M4,6.2 V1.2 M2.2,3 L4,1.2 L5.8,3 M0.9,8 H7.1" stroke="#7a7a7a" stroke-width="0.75" fill="none"/></svg>
 <div class="abs" style="left:35.5px;top:26.3px;font-size:9.4px;line-height:11px;color:#555;white-space:nowrap;transform-origin:0 50%;transform:scaleX(0.9)">Create</div>
</div>
<!-- drag handle -->
<div class="abs" style="left:162.3px;top:61.5px;width:0.8px;height:9px;background:#dcdcdc"></div>
<div class="abs" style="left:164.2px;top:61.5px;width:0.8px;height:9px;background:#dcdcdc"></div>

<!-- flow panel -->
<div class="panel" id="fp" style="left:166px;top:43px;width:183px;height:248px">
 <div class="abs" style="left:0.5px;top:0;width:182.5px;height:248px"><!-- coords inside are page coords minus (166.5,43) -->
 <div class="abs b" style="left:7.4px;top:8.8px;font-size:9.9px;line-height:12px;color:#3c3c3c;white-space:nowrap;transform-origin:0 50%;transform:scaleX(0.905)">External flow volume</div>
 <div class="abs" style="left:158.5px;top:4px;width:20px;height:20.3px;border:1px solid #ebebeb;border-radius:2px;background:#fff">
  <svg class="abs" style="left:5.5px;top:5.5px" width="7" height="7" viewBox="0 0 7 7"><path d="M1.2,1.2 L5.8,5.8 M5.8,1.2 L1.2,5.8" stroke="#666" stroke-width="0.9" fill="none"/></svg>
 </div>
 <div class="abs" style="left:-0.5px;top:28px;width:183px;height:1px;background:#ededed"></div>
 <!-- blue highlight box -->
 <div class="abs" style="left:-0.7px;top:28.8px;width:177.2px;height:98.1px;border:2px solid #3f80e2;border-right-width:1.4px"></div>
 <div class="lbl" style="left:7.3px;top:39px;font-size:8.8px;color:#3a3a3a;-webkit-text-stroke:0.3px #3a3a3a;transform:scaleX(0.93)">Box dimensions</div>
 <div class="lbl" style="left:158.3px;top:39px;font-size:9.8px">m</div>
 <svg class="abs" style="left:167px;top:42px" width="6" height="4" viewBox="0 0 6 4"><path d="M0.6,0.6 L3,3 L5.4,0.6" stroke="#666" stroke-width="0.8" fill="none"/></svg>
 <div class="ul" style="left:155.5px;top:53px;width:18px"></div>

 <div class="lbl" style="left:7.3px;top:61.5px">X min</div><div class="val" style="left:35.5px;top:62.0px">-5</div><div class="ul" style="left:33.5px;top:76px;width:54.5px"></div>
 <div class="lbl" style="left:95.5px;top:61.5px">X max</div><div class="val" style="left:125px;top:62.0px">20</div><div class="ul" style="left:122.5px;top:76px;width:51.5px"></div>

 <div class="lbl" style="left:7.3px;top:84.5px">Y min</div><div class="val" style="left:35.5px;top:85.0px">-5</div><div class="ul" style="left:33.5px;top:99px;width:54.5px"></div>
 <div class="lbl" style="left:95.5px;top:84.5px">Y max</div><div class="val" style="left:125px;top:85.0px">0</div><div class="ul" style="left:122.5px;top:99px;width:51.5px"></div>

 <div class="lbl" style="left:7.3px;top:107px">Z min</div><div class="val" style="left:35.5px;top:107.5px">0</div><div class="ul" style="left:33.5px;top:122px;width:54.5px"></div>
 <div class="lbl" style="left:95.5px;top:107px">Z max</div><div class="val" style="left:125px;top:107.5px">5</div><div class="ul" style="left:122.5px;top:122px;width:51.5px"></div>

 <div class="lbl" style="left:7.3px;top:130px;font-size:8.8px;color:#3a3a3a;-webkit-text-stroke:0.3px #3a3a3a;transform:scaleX(0.91)">Seed face (optional)</div>
 <div class="lbl" style="left:148.5px;top:131px;color:#2485b4;font-size:8.3px">Clear list</div>
 <div class="abs" style="left:7.5px;top:145.4px;width:168px;height:22px;background:#e7f4fb;border:1.3px solid #9ad6ec;border-left:1.8px solid #55aed0;border-radius:1px"></div>
 <div class="lbl" style="left:14px;top:151.3px;font-style:italic;color:#6c6c6c;font-size:9px;transform:scaleX(0.79)">Pick Face</div>

 <div class="lbl" style="left:7.3px;top:174.5px;font-size:8.8px;color:#3a3a3a;-webkit-text-stroke:0.3px #3a3a3a;transform:scaleX(0.93)">Excluded parts (optional)</div>
 <div class="lbl" style="left:148.5px;top:175px;color:#2485b4;font-size:8.3px">Clear list</div>
 <div class="abs" style="left:7.5px;top:190px;width:168px;height:21.5px;background:#fff;border:1px solid #f9d8db;border-radius:1px"></div>
 <div class="lbl" style="left:14px;top:195.3px;font-style:italic;color:#6c6c6c;font-size:9px;transform:scaleX(0.81)">Pick Volumes</div>

 <div class="abs" style="left:-0.5px;top:216.5px;width:183px;height:1px;background:#e8e8e8"></div>
 <div class="abs" style="left:6.5px;top:222.5px;width:19.8px;height:20.5px;border:1px solid #e6e6e6;border-radius:2px;background:#fff">
  <svg class="abs" style="left:4.6px;top:4.4px" width="9" height="10" viewBox="0 0 9 10"><path d="M1.9,2.8 h5.2 l-0.45,6.2 h-4.3 z" fill="#e9e9e9" stroke="#a6a6a6" stroke-width="0.65"/><path d="M1.1,2.5 h6.8 M3.4,1.5 h2.2" stroke="#a0a0a0" stroke-width="0.75" fill="none"/><path d="M3.4,4 v4 M4.5,4 v4 M5.6,4 v4" stroke="#aaaaaa" stroke-width="0.5"/></svg>
 </div>
 <div class="abs" style="left:120.5px;top:222px;width:56px;height:20.5px;background:#0a72a5;border-radius:2px;color:#fff;font-size:8.6px;line-height:21.4px;text-align:center;-webkit-text-stroke:0.25px #fff"><span style="display:inline-block;transform:scaleX(0.92)">Apply</span></div>
</div></div>


<!-- numbered markers -->
<div class="num" style="left:49px;top:33.5px"><svg class="abs" style="left:0;top:0" width="25.4" height="25.4" viewBox="-12.7 -12.7 25.4 25.4"><polygon points="1.1,-6.3 2.6,-6.3 2.6,6.8 0.8,6.8 0.8,-3.7 -3.3,-1.5 -3.3,-3.2" fill="#fff"/></svg></div>
<div class="num" style="left:353px;top:109px">2</div>
<div class="num" style="left:353.2px;top:184.5px">3</div>
<div class="num" style="left:353.1px;top:227.2px">4</div>
<div class="num" style="left:353.1px;top:262.5px">5</div>
</div>
</body>
</html>
